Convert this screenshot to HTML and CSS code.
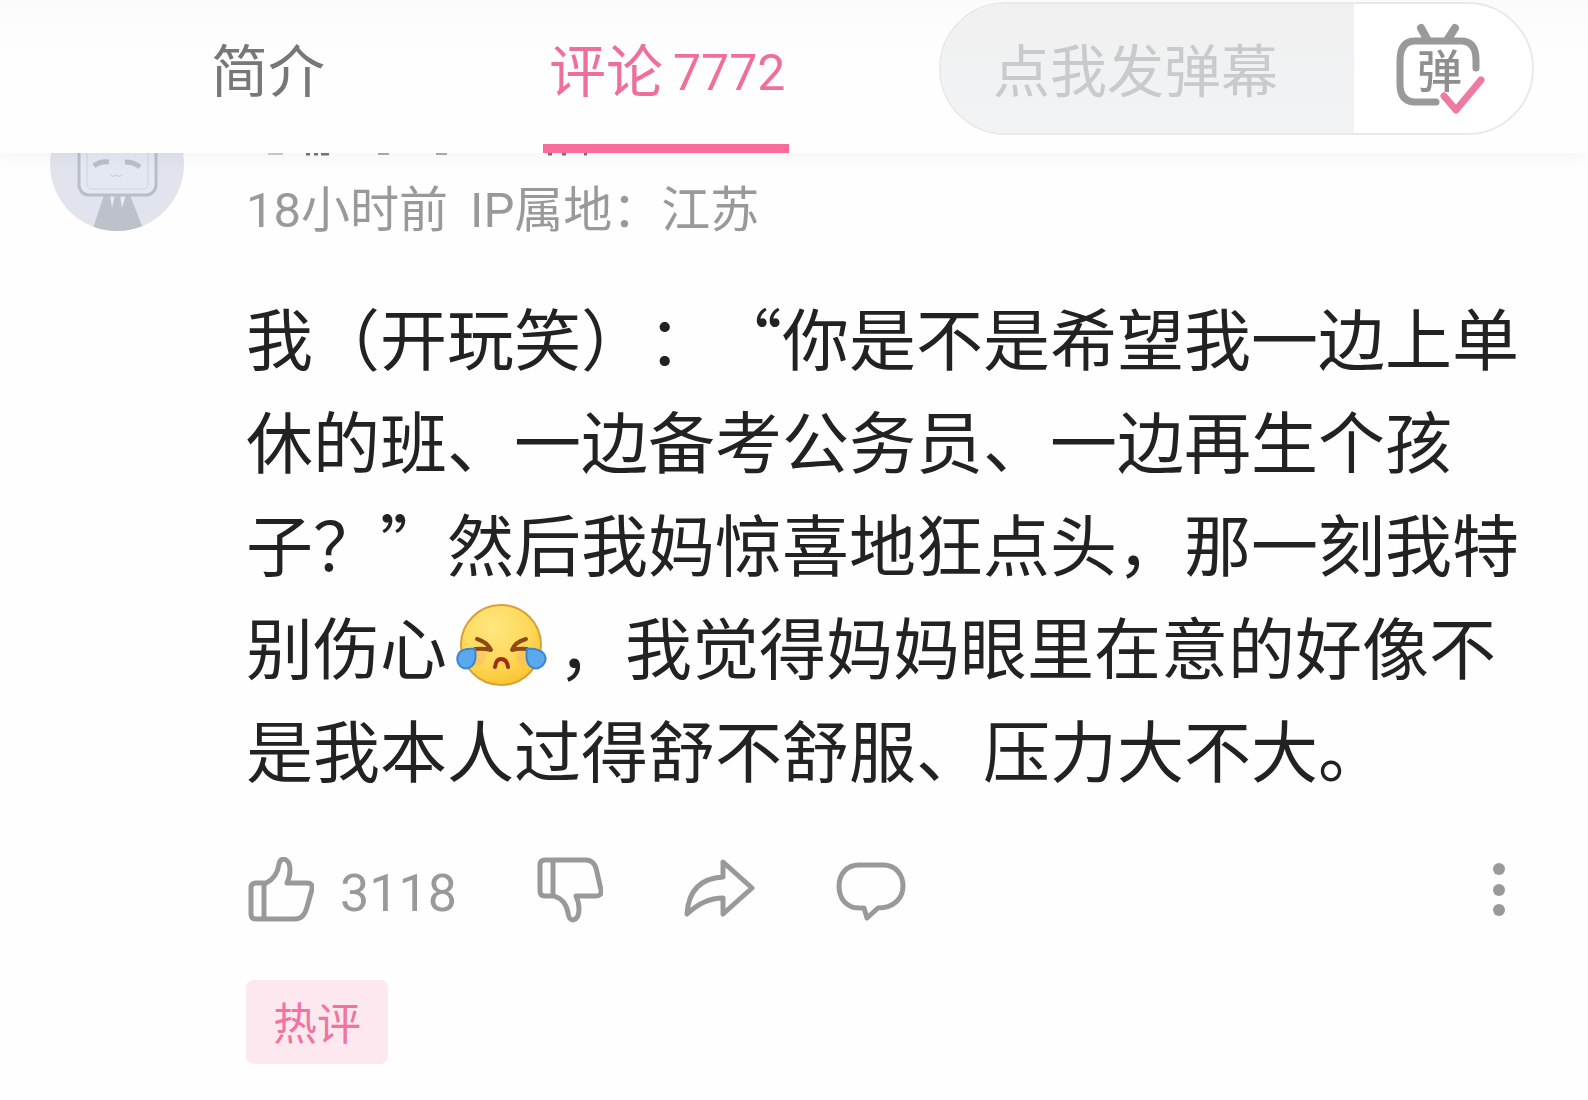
FILE: index.html
```html
<!DOCTYPE html>
<html lang="zh-CN">
<head>
    <meta charset="UTF-8">
    <meta name="viewport" content="width=device-width, initial-scale=1.0">
    <title>评论</title>
    <link rel="stylesheet" href="styles.css">
</head>
<body>
    <header class="top-bar">
        <nav class="tabs">
            <a href="#intro" class="tab">简介</a>
            <a href="#comments" class="tab active">评论<span class="tab-count">7772</span></a>
        </nav>
        <div class="danmu-box">
            <input type="text" class="danmu-input" placeholder="点我发弹幕" aria-label="点我发弹幕">
            <button class="danmu-toggle" aria-label="弹幕开关">
                <svg width="92" height="92" viewBox="0 0 92 92" fill="none" stroke-linecap="round" stroke-linejoin="round">
                    <g stroke="#999" stroke-width="7">
                        <path d="M26 5L32 16M60 5L53 16" stroke-width="8"/>
                        <path d="M81 45V37Q81 18 66 18H20Q5 18 5 38V61Q5 78 19 79H41"/>
                    </g>
                    <text x="22" y="65" class="danmu-char">弹</text>
                    <path d="M49 73L61 87L86 57" stroke="#ee7aa2" stroke-width="7"/>
                </svg>
            </button>
        </div>
    </header>

    <main id="comments">
        <article class="comment">
            <svg class="avatar" viewBox="0 0 134 134" aria-hidden="true">
                <defs>
                    <clipPath id="avatar-clip"><circle cx="67" cy="67" r="67"/></clipPath>
                </defs>
                <g clip-path="url(#avatar-clip)">
                    <rect width="134" height="134" fill="#e1e4ec"/>
                    <path d="M54 98L42 134H94L80 98Z" fill="#bcc1ca"/>
                    <path d="M60 98L62 111L65 98ZM70 98L72 111L76 98Z" fill="#e9ebf1"/>
                    <rect x="29" y="20" width="77" height="78" rx="10" fill="#e4e8f0" stroke="#b8bec8" stroke-width="3"/>
                    <rect x="37" y="28" width="61" height="64" rx="5" fill="none" stroke="#d0d5de" stroke-width="1"/>
                    <path d="M44 69Q50 64 59 65M75 65Q84 65 90 70" fill="none" stroke="#bac0c9" stroke-width="5"/>
                    <path d="M60 77Q63 81 66 78Q70 81 73 77" fill="none" stroke="#c2c7d0" stroke-width="1"/>
                </g>
            </svg>
            <div class="comment-main">
                <!-- user name, scrolled under the bar -->
                <svg class="user-name" viewBox="0 0 350 60" aria-hidden="true">
                    <path d="M22 57H37" stroke="#ccc" stroke-width="2"/>
                    <path d="M60 57H64M68 57H72M75 57H83M302 57H306M316 57H320M338 57H341" stroke="#777" stroke-width="3"/>
                    <path d="M132 57H143M190 57H201" stroke="#aaa" stroke-width="2"/>
                </svg>
                <div class="meta">
                    <span>18小时前</span>
                    <span>IP属地：江苏</span>
                </div>
                <p class="comment-text">我（开玩笑）：“你是不是希望我一边上单休的班、一边备考公务员、一边再生个孩子？”然后我妈惊喜地狂点头，那一刻我特别伤心<svg class="emoji" viewBox="0 0 92 84" role="img" aria-label="大哭">
                    <defs>
                        <radialGradient id="face" cx="40%" cy="28%" r="75%">
                            <stop offset="0" stop-color="#ffe680"/>
                            <stop offset="0.6" stop-color="#fed95a"/>
                            <stop offset="1" stop-color="#f9c42f"/>
                        </radialGradient>
                    </defs>
                    <circle cx="46" cy="42" r="40" fill="url(#face)" stroke="#d9a036" stroke-width="2"/>
                    <circle cx="22" cy="54" r="9" fill="#fdb765" opacity="0.5"/>
                    <circle cx="70" cy="54" r="9" fill="#fdb765" opacity="0.5"/>
                    <g fill="none" stroke="#8f4a14" stroke-width="4" stroke-linecap="round" stroke-linejoin="round">
                        <path d="M22 36Q32 39 36 47Q28 45 20 46"/>
                        <path d="M71 36Q60 39 57 47Q64 45 72 46"/>
                        <path d="M40 64Q41 56 46 56Q52 56 53 64" stroke="#a02c18"/>
                    </g>
                    <path d="M20 46Q22 58 17 63Q11 68 5 63Q0 57 4 50Q8 45 20 46Z" fill="#5aa9ee" stroke="#3f86c9" stroke-width="2"/>
                    <path d="M72 46Q70 58 75 63Q81 68 87 63Q93 57 89 51Q84 45 72 46Z" fill="#5aa9ee" stroke="#3f86c9" stroke-width="2"/>
                </svg>，我觉得妈妈眼里在意的好像不是我本人过得舒不舒服、压力大不大。</p>
                <div class="actions">
                    <button class="action like">
                        <svg width="66" height="66" viewBox="0 0 66 66">
                            <path d="M8 26H18Q29 21 31 7Q32 2 36 2Q42 4 42 13Q42 20 39 26H59Q65 26 64 32L59 50Q56 62 47 62H8Q3 62 3 57V31Q3 26 8 26ZM16 26V62"/>
                        </svg>
                        <span class="like-count">3118</span>
                    </button>
                    <button class="action" aria-label="踩">
                        <svg width="66" height="66" viewBox="0 0 66 66">
                            <path d="M8 3H49Q56 3 59 11L64 33Q65 39 59 39H39Q42 45 42 52Q42 62 36 63Q32 63 31 56Q29 43 17 39H8Q3 39 3 34V8Q3 3 8 3ZM16 3V39"/>
                        </svg>
                    </button>
                    <button class="action" aria-label="分享">
                        <svg width="72" height="66" viewBox="0 0 72 66">
                            <path d="M40 5L69 31L40 57V41Q21 41 4 57Q6 22 40 20Z"/>
                        </svg>
                    </button>
                    <button class="action" aria-label="回复">
                        <svg width="72" height="66" viewBox="0 0 72 66">
                            <path d="M24 8H48C61 8 68 18 68 29C68 42 58 51 43 51L32 61L29 51H24C11 51 4 41 4 29C4 18 11 8 24 8Z"/>
                        </svg>
                    </button>
                    <button class="action more" aria-label="更多">
                        <svg width="14" height="66" viewBox="0 0 14 66">
                            <circle cx="7" cy="12" r="6"/>
                            <circle cx="7" cy="33" r="6"/>
                            <circle cx="7" cy="53" r="6"/>
                        </svg>
                    </button>
                </div>
                <span class="hot-tag">热评</span>
            </div>
        </article>
    </main>
</body>
</html>
```
FILE: styles.css
```css
* {
    box-sizing: border-box;
}
body {
    margin: 0;
    background-color: #fefefe;
    color: #222;
    font-family: Roboto, "Noto Sans CJK SC", sans-serif;
}
button {
    padding: 0;
    border: none;
    background: none;
    font-family: inherit;
    cursor: pointer;
}
svg {
    display: block;
}

/* top bar */
.top-bar {
    position: fixed;
    top: 0;
    left: 0;
    right: 0;
    z-index: 1;
    display: flex;
    justify-content: space-between;
    height: 153px;
    padding: 0 54px 0 211px;
    background: linear-gradient(#fbfbfb, #fefefe 40%);
    box-shadow: 0 2px 20px rgba(0,0,0,0.05);
}
.tabs {
    display: flex;
    gap: 218px;
}
.tab {
    display: flex;
    align-items: center;
    padding-top: 2px;
    color: #777;
    font-size: 57px;
    line-height: 80px;
    text-decoration: none;
    white-space: nowrap;
    border-bottom: 9px solid transparent;
}
.tab.active {
    padding-left: 6px;
    padding-right: 4px;
    color: #ef6f9c;
    border-bottom-color: #fa6b9b;
}
.tab-count {
    margin-left: 10px;
    font-size: 50px;
}
.danmu-box {
    display: flex;
    flex: 0 1 595px;
    height: 133px;
    margin-top: 2px;
    border: 2px solid #e9e9ea;
    border-radius: 67px;
    background-color: #fff;
    overflow: hidden;
}
.danmu-input {
    flex: 1;
    min-width: 0;
    padding: 8px 0 0 52px;
    border: none;
    outline: none;
    background: linear-gradient(#f0f0f0, #f1f3f5);
    color: #777;
    font-family: inherit;
    font-size: 57px;
}
.danmu-input::placeholder {
    color: #c9cacb;
    opacity: 1;
}
.danmu-toggle {
    display: flex;
    align-items: center;
    width: 178px;
    padding-left: 41px;
}
.danmu-char {
    fill: #8f8f8f;
    font-family: "Noto Sans CJK SC", sans-serif;
    font-size: 45px;
    font-weight: 500;
}

/* comment */
.comment {
    display: flex;
    gap: 62px;
    padding: 97px 66px 36px 50px;
}
.avatar {
    flex: none;
    width: 134px;
    height: 134px;
}
.comment-main {
    flex: 1;
    min-width: 0;
}
.user-name {
    width: 350px;
    height: 60px;
}
.meta {
    display: flex;
    gap: 22px;
    margin-top: 26px;
    color: #999;
    font-size: 49px;
    line-height: 56px;
}
.comment-text {
    margin: 45px 0 58px;
    font-family: "Noto Sans CJK SC", sans-serif;
    font-size: 67px;
    line-height: 103px;
    text-spacing-trim: space-all;
}
.emoji {
    display: inline-block;
    width: 92px;
    height: 84px;
    margin: 0 11px 0 8px;
    vertical-align: -13px;
}
.actions {
    display: flex;
    align-items: center;
    gap: 80px;
    height: 66px;
    padding-left: 2px;
}
.action {
    display: flex;
    align-items: center;
    color: #999;
    font-size: 52px;
    line-height: 66px;
}
.action svg {
    fill: none;
    stroke: #999;
    stroke-width: 5;
    stroke-linejoin: round;
}
.like {
    gap: 26px;
}
.like-count {
    padding-top: 8px;
}
.more {
    margin-left: auto;
    margin-right: 16px;
}
.action.more svg {
    fill: #999;
    stroke: none;
}
.hot-tag {
    display: inline-block;
    margin-top: 57px;
    padding: 6px 27px 0;
    border-radius: 8px;
    background-color: #fde8ef;
    color: #ef75a0;
    font-size: 44px;
    line-height: 78px;
}
```
